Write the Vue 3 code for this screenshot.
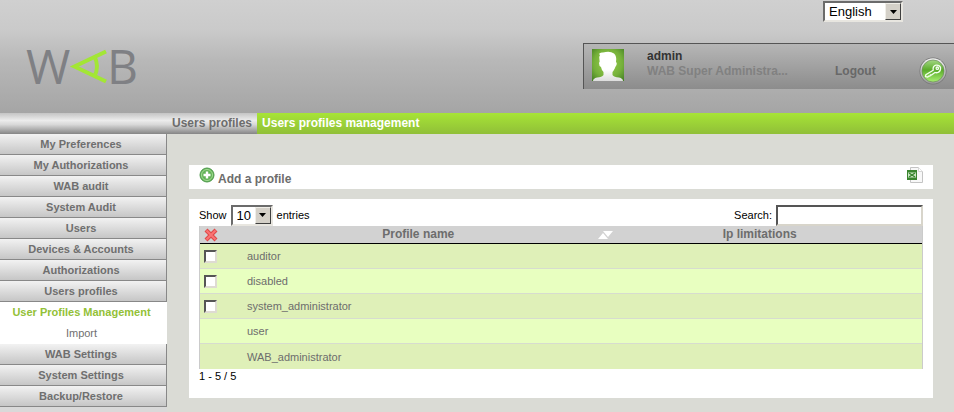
<script setup>
import { ref, computed } from 'vue'

const language = ref('English')
const pageSize = ref('10')
const search = ref('')

const menu = [
  { label: 'My Preferences' },
  { label: 'My Authorizations' },
  { label: 'WAB audit' },
  { label: 'System Audit' },
  { label: 'Users' },
  { label: 'Devices & Accounts' },
  { label: 'Authorizations' },
  {
    label: 'Users profiles',
    children: [
      { label: 'User Profiles Management', current: true },
      { label: 'Import' },
    ],
  },
  { label: 'WAB Settings' },
  { label: 'System Settings' },
  { label: 'Backup/Restore' },
]

const profiles = [
  { name: 'auditor', removable: true },
  { name: 'disabled', removable: true },
  { name: 'system_administrator', removable: true },
  { name: 'user', removable: false },
  { name: 'WAB_administrator', removable: false },
]

const visible = computed(() =>
  profiles.filter((p) => p.name.toLowerCase().includes(search.value.toLowerCase()))
)
</script>

<template>
  <div class="page">
    <header class="header">
      <svg class="logo" viewBox="0 0 120 72" role="img" aria-label="WAB">
        <text class="logo-text" x="0" y="54">W</text>
        <g fill="none" stroke="#a3e635" stroke-width="4">
          <path d="M80 21.500L48.500 36.500L80 51.500" />
          <path d="M68 25.500Q74 36.500 68 47.500" />
        </g>
        <text class="logo-text" x="81" y="54">B</text>
      </svg>
      <div class="account">
        <div class="select language">
          <select v-model="language" aria-label="Language">
            <option>English</option>
            <option>Français</option>
          </select>
          <span class="arrow"><svg viewBox="0 0 7 4"><path d="M0 0h7L3.500 4z" /></svg></span>
        </div>
        <div class="user">
          <svg class="avatar" viewBox="0 0 32 32" aria-hidden="true">
            <defs>
              <radialGradient id="av" cx=".5" cy=".45" r=".75">
                <stop offset="0" stop-color="#9bd04f" />
                <stop offset=".6" stop-color="#75b03a" />
                <stop offset="1" stop-color="#3f7a22" />
              </radialGradient>
              <linearGradient id="head" x1="0" y1="0" x2="0" y2="1">
                <stop offset=".6" stop-color="#fff" />
                <stop offset="1" stop-color="#dcdcdc" />
              </linearGradient>
            </defs>
            <rect width="32" height="32" fill="url(#av)" />
            <path
              fill="url(#head)"
              d="M7 5Q8 3 11 3.500Q18 1.500 22 4.500Q25 7 24 13Q25.500 14 24 17Q23 18 23 19Q21.500 22 20.500 23V26Q22 28 27 28.500Q31 29.500 31 32H1Q1 29.500 5 28.500Q10 28 11.500 26V23Q9.500 21 9 18Q7 17 7 14Q8 13 7.500 11Q6.500 8 8 6Z"
            />
          </svg>
          <div class="identity">
            <span class="name">admin</span>
            <span class="role">WAB Super Administra...</span>
          </div>
          <a class="logout" href="#">Logout</a>
          <a class="key" href="#" aria-label="Change password">
            <svg viewBox="0 0 28 28">
              <defs>
                <linearGradient id="ring" x1="0" y1="0" x2="0" y2="1">
                  <stop offset="0" stop-color="#f2f2f2" />
                  <stop offset="1" stop-color="#999" />
                </linearGradient>
                <linearGradient id="ball" x1="0" y1="0" x2="0" y2="1">
                  <stop offset="0" stop-color="#a3d883" />
                  <stop offset=".45" stop-color="#5bab2b" />
                  <stop offset="1" stop-color="#a8f070" />
                </linearGradient>
              </defs>
              <circle cx="14" cy="14" r="13.500" fill="#777" />
              <circle cx="14" cy="14" r="12.700" fill="url(#ring)" />
              <circle cx="14" cy="14" r="11" fill="url(#ball)" stroke="#6c8b5b" stroke-width=".7" />
              <g fill="none" stroke="#f4fff0" stroke-width="1.300" stroke-linejoin="round">
                <path d="M14.200 13.200Q13.500 9 17 8.200Q20.500 7.800 21.500 10.500Q22 14 19 15.500Q17.500 16 16 15.500L12.500 18L11.500 17.800L11 19L9.500 19.200L8.800 20.200L6.500 19.600L6.800 17.800Z" />
                <circle cx="18.300" cy="11.200" r="1.200" />
              </g>
            </svg>
          </a>
        </div>
      </div>
    </header>

    <nav class="crumbs" aria-label="Breadcrumb">
      <a class="crumb" href="#">Users profiles</a>
      <span class="crumb active">Users profiles management</span>
    </nav>

    <div class="body">
      <nav class="sidebar" aria-label="Main menu">
        <template v-for="item in menu" :key="item.label">
          <a class="item" href="#">{{ item.label }}</a>
          <div v-if="item.children" class="submenu">
            <a
              v-for="child in item.children"
              :key="child.label"
              :class="['subitem', { current: child.current }]"
              href="#"
            >{{ child.label }}</a>
          </div>
        </template>
      </nav>

      <main class="content">
        <section class="toolbar">
          <a class="add" href="#">
            <svg class="plus" viewBox="0 0 16 16" aria-hidden="true">
              <circle cx="8" cy="8" r="7" fill="#62b257" stroke="#4f9a4c" />
              <circle cx="8" cy="8" r="5.500" fill="none" stroke="#a4dc94" />
              <path d="M8 4.500v7M4.500 8h7" stroke="#fff" stroke-width="2.400" />
            </svg>
            <span>Add a profile</span>
          </a>
          <a class="export" href="#" aria-label="Export">
            <svg viewBox="0 0 16 16">
              <path d="M3.500.5h8l4 4v11h-12z" fill="#f8f8f8" stroke="#c4c4c4" />
              <path d="M11.500.5v4h4" fill="#fff" stroke="#d8d8d8" />
              <path d="M0 3h10v10H0z" fill="#39852e" />
              <path d="M1 5.500h8v5H1z" fill="#cfe8c8" />
              <path d="M2 6L8 10M8 6L2 10" stroke="#39852e" stroke-width="1.500" />
            </svg>
          </a>
        </section>

        <section class="panel">
          <div class="controls">
            <div class="length">
              <label for="length">Show</label>
              <div class="select size">
                <select id="length" v-model="pageSize">
                  <option>10</option>
                  <option>25</option>
                  <option>50</option>
                </select>
                <span class="arrow"><svg viewBox="0 0 7 4"><path d="M0 0h7L3.500 4z" /></svg></span>
              </div>
              <span>entries</span>
            </div>
            <div class="search">
              <label for="search">Search:</label>
              <input id="search" v-model="search" type="text" />
            </div>
          </div>

          <table class="profiles">
            <colgroup>
              <col class="col-check" />
              <col class="col-name" />
              <col />
            </colgroup>
            <thead>
              <tr>
                <th class="check" scope="col">
                  <button class="delete" type="button" aria-label="Delete selected">
                    <svg viewBox="0 0 14 14">
                      <path d="M2 2L12 12M12 2L2 12" stroke="#e04848" stroke-width="4.200" />
                      <path d="M2.500 2.500L11.500 11.500M11.500 2.500L2.500 11.500" stroke="#fa7474" stroke-width="2" />
                    </svg>
                  </button>
                </th>
                <th scope="col">
                  <div class="heading">
                    <span>Profile name</span>
                    <svg class="sort" viewBox="0 0 15 8" aria-hidden="true">
                      <path d="M0 8L5 2L10 8zM5 0h10L10 6z" fill="#fff" />
                    </svg>
                  </div>
                </th>
                <th scope="col"><div class="heading plain"><span>Ip limitations</span></div></th>
              </tr>
            </thead>
            <tbody>
              <tr v-for="profile in visible" :key="profile.name">
                <td class="check">
                  <input v-if="profile.removable" type="checkbox" :aria-label="'Select ' + profile.name" />
                </td>
                <td>{{ profile.name }}</td>
                <td></td>
              </tr>
            </tbody>
          </table>
          <div class="info">1 - {{ visible.length }} / {{ profiles.length }}</div>
        </section>
      </main>
    </div>
  </div>
</template>

<style>
body {
  background: #dadbd5;
}
</style>

<style scoped>
.page {
  min-height: 100vh;
  display: flex;
  flex-direction: column;
  font-family: "Liberation Sans", Arial, sans-serif;
  font-size: 11px;
  color: #000;
}
.page * {
  box-sizing: border-box;
}
a {
  color: inherit;
  text-decoration: none;
}
svg {
  display: block;
}

.header {
  display: flex;
  justify-content: space-between;
  height: 113px;
  background: linear-gradient(#d0d0d0, #cacaca 30px, #b8b8b8 60px, #a5a5a5);
}
.logo {
  width: 120px;
  height: 72px;
  margin: 30px 0 0 26px;
}
.logo-text {
  font-family: "Open Sans", sans-serif;
  font-size: 48px;
  fill: #7f8084;
}
.account {
  display: flex;
  flex-direction: column;
  align-items: flex-end;
  gap: 21px;
  width: 371px;
  padding-top: 1px;
}
.user {
  display: flex;
  align-items: flex-start;
  width: 100%;
  height: 46px;
  padding: 5px 0 0 8px;
  border: solid #555;
  border-width: 1px 0 0 1px;
  background: linear-gradient(#b6b6b6, #8c8c8c);
  font-size: 12px;
  font-weight: bold;
}
.avatar {
  width: 32px;
  height: 32px;
}
.identity {
  display: flex;
  flex-direction: column;
  width: 211px;
  padding-left: 23px;
  line-height: 15px;
}
.name {
  color: #333;
}
.role {
  color: #818181;
  white-space: nowrap;
}
.logout {
  flex: 1;
  padding-top: 15px;
  line-height: 15px;
  color: #686868;
}
.key {
  width: 28px;
  margin: 8px 7px 0 0;
}

.select {
  position: relative;
  height: 21px;
}
.select select {
  appearance: none;
  display: block;
  width: 100%;
  height: 100%;
  padding: 0 4px;
  border: 2px solid;
  border-color: #6b6b6b #e8e6e0 #e8e6e0 #6b6b6b;
  border-radius: 0;
  background: #fff;
  color: #000;
  font: 13px "Liberation Sans", Arial, sans-serif;
}
.arrow {
  position: absolute;
  top: 2px;
  right: 2px;
  bottom: 2px;
  width: 16px;
  display: grid;
  place-items: center;
  border: 1px solid;
  border-color: #f0eee8 #404040 #404040 #f0eee8;
  background: #d4d0c8;
  pointer-events: none;
}
.arrow svg {
  width: 7px;
  height: 4px;
}
.language {
  width: 80px;
  margin-right: 51px;
}
.size {
  width: 42px;
}

.crumbs {
  display: flex;
  height: 21px;
  font-size: 12px;
  font-weight: bold;
  line-height: 20px;
  color: #6d6d6d;
}
.crumb {
  padding: 0 5px 0 172px;
  background: linear-gradient(#c4c4c4, #ececec 35%, #d8d8d8 55%, #858585);
}
.crumb.active {
  flex: 1;
  padding-left: 5px;
  background: linear-gradient(#a7e436, #90bf38);
  color: #fff;
}

.body {
  flex: 1;
  display: flex;
}
.sidebar {
  width: 167px;
  font-size: 11px;
  text-align: center;
  color: #6f6f6f;
  background: #d9d9d9;
}
.item {
  display: block;
  height: 21px;
  padding-right: 4px;
  border: solid #888;
  border-width: 0 1px 1px 0;
  background: linear-gradient(#f2f2f2, #c6c6c6);
  font-weight: bold;
  line-height: 20px;
}
.submenu {
  background: #fff;
}
.subitem {
  display: block;
  height: 21px;
  padding-right: 4px;
  line-height: 21px;
}
.subitem.current {
  font-weight: bold;
  color: #93c137;
}

.content {
  flex: 1;
  display: flex;
  flex-direction: column;
  gap: 10px;
  padding: 31px 21px 14px 22px;
}
.toolbar {
  display: flex;
  justify-content: space-between;
  height: 24px;
  padding: 2px 10px 0;
  background: #fff;
}
.add {
  display: flex;
  gap: 3px;
  color: #6d6d6d;
  font-size: 12px;
  font-weight: bold;
  line-height: 24px;
}
.plus,
.export svg {
  width: 16px;
  height: 16px;
}
.panel {
  padding: 5px 10px 14px;
  background: #fff;
}
.controls {
  display: flex;
  justify-content: space-between;
  height: 22px;
}
.length,
.search {
  display: flex;
  align-items: center;
  gap: 4px;
  line-height: 14px;
}
.search input {
  width: 147px;
  height: 21px;
  padding: 0 3px;
  border: 2px solid;
  border-color: #555 #d8d5cb #d8d5cb #555;
  border-radius: 0;
  background: #fff;
  font: 13px "Liberation Sans", Arial, sans-serif;
}

.profiles {
  width: 100%;
  table-layout: fixed;
  border-collapse: separate;
  border-spacing: 0;
  border: solid #cbcbcb;
  border-width: 0 1px;
  color: #6d6d6d;
}
.col-check {
  width: 38px;
}
.col-name {
  width: 52%;
}
th {
  height: 18px;
  padding: 0;
  border-bottom: 1px solid #000;
  background: #d2d2d2;
  font-size: 12px;
  line-height: 17px;
}
.heading {
  display: flex;
  align-items: center;
}
.heading.plain {
  padding-right: 16px;
}
.heading span {
  flex: 1;
}
.sort {
  width: 15px;
  height: 8px;
}
.delete {
  display: block;
  width: 14px;
  height: 14px;
  padding: 0;
  border: 0;
  background: none;
}
.profiles .check {
  padding: 0 0 0 4px;
}
td {
  height: 25px;
  padding: 0 9px;
  border-bottom: 1px solid #d7dccf;
  background: #dff0b8;
}
tr:nth-child(even) td {
  background: #e8ffc0;
}
tr:last-child td {
  border-bottom: 0;
}
.check input {
  appearance: none;
  display: block;
  width: 13px;
  height: 13px;
  margin: 0;
  border: 2px solid;
  border-color: #555 #dedbd2 #dedbd2 #555;
  background: #fff;
}
.check input:checked {
  background: #444;
}
.info {
  line-height: 15px;
}
</style>
